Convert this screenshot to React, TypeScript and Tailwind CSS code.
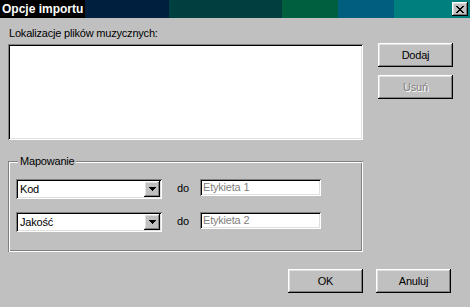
import React from "react";

const raised =
  "shadow-[inset_-1px_-1px_0_#000,inset_1px_1px_0_#fff,inset_-2px_-2px_0_#808080,inset_2px_2px_0_#dfdfdf]";
const sunken =
  "shadow-[inset_1px_1px_0_#808080,inset_-1px_-1px_0_#fff,inset_2px_2px_0_#000,inset_-2px_-2px_0_#dfdfdf]";

function Button({ label, disabled }: { label: string; disabled?: boolean }) {
  return (
    <div
      className={`w-[75px] h-[24px] bg-[#c0c0c0] flex items-center justify-center ${raised} ${
        disabled ? "text-[#808080] [text-shadow:1px_1px_0_#fff]" : "text-black"
      }`}
    >
      {label}
    </div>
  );
}

function Combo({ value }: { value: string }) {
  return (
    <div className={`w-[146px] h-[20px] bg-white flex items-stretch p-[2px] ${sunken}`}>
      <div className="flex-1 flex items-center pl-[2px] text-black">{value}</div>
      <div className={`w-[16px] bg-[#c0c0c0] flex items-center justify-center ${raised}`}>
        <svg width="7" height="4" viewBox="0 0 7 4">
          <path d="M0 0h7v1H0zM1 1h5v1H1zM2 2h3v1H2zM3 3h1v1H3z" fill="#000" />
        </svg>
      </div>
    </div>
  );
}

function Edit({ value }: { value: string }) {
  return (
    <div className={`w-[121px] h-[17px] bg-white flex items-center pl-[3px] text-[#808080] ${sunken}`}>
      {value}
    </div>
  );
}

export default function App() {
  return (
    <div className="w-[470px] h-[307px] bg-[#c0c0c0] flex flex-col font-['Liberation_Sans',Arial,sans-serif] text-[11px] leading-[13px] tracking-[-0.2px] text-black overflow-hidden">
      {/* title bar */}
      <div className="h-[18px] flex shrink-0">
        <div className="w-[85px] bg-black text-white font-bold text-[12px] leading-[18px] pl-[2px] tracking-[0px] whitespace-nowrap overflow-hidden">
          Opcje importu
        </div>
        <div className="w-[84px] bg-[#001f3f]" />
        <div className="w-[113px] bg-[#003f3f]" />
        <div className="w-[56px] bg-[#005f3f]" />
        <div className="w-[56px] bg-[#005f7f]" />
        <div className="flex-1 bg-[#007f7f] flex items-start justify-end pt-[2px] pr-[2px]">
          <div className={`w-[16px] h-[14px] bg-[#c0c0c0] flex items-center justify-center ${raised}`}>
            <svg width="8" height="7" viewBox="0 0 8 7">
              <path
                d="M0 0h2v1H0zM6 0h2v1H6zM1 1h2v1H1zM5 1h2v1H5zM2 2h4v1H2zM3 3h2v1H3zM2 4h4v1H2zM1 5h2v1H1zM5 5h2v1H5zM0 6h2v1H0zM6 6h2v1H6z"
                fill="#000"
              />
            </svg>
          </div>
        </div>
      </div>

      {/* body */}
      <div className="flex flex-col pl-[8px] pt-[9px]">
        <div className="flex">
          <div className="w-[355px] flex flex-col">
            <div className="h-[13px] pl-[1px]">Lokalizacje plików muzycznych:</div>
            <div className={`mt-[4px] h-[96px] bg-white ${sunken}`} />
          </div>
          <div className="ml-[15px] pt-[16px] flex flex-col gap-[8px]">
            <Button label="Dodaj" />
            <Button label="Usuń" disabled />
          </div>
        </div>

        {/* group box */}
        <div
          className={`relative mt-[21px] w-[355px] h-[91px] shadow-[inset_1px_1px_0_#808080,inset_-1px_-1px_0_#fff,inset_2px_2px_0_#fff,inset_-2px_-2px_0_#808080] pl-[8px] pt-[18px] flex flex-col gap-[13px]`}
        >
          <span className="absolute left-[10px] top-[-6px] bg-[#c0c0c0] px-[2px] leading-[13px]">
            Mapowanie
          </span>
          <div className="flex items-start">
            <Combo value="Kod" />
            <span className="ml-[15px] mt-[3px] w-[23px]">do</span>
            <Edit value="Etykieta 1" />
          </div>
          <div className="flex items-start">
            <Combo value="Jakość" />
            <span className="ml-[15px] mt-[3px] w-[23px]">do</span>
            <Edit value="Etykieta 2" />
          </div>
        </div>

        {/* bottom buttons */}
        <div className="mt-[17px] flex pl-[280px] gap-[13px]">
          <Button label="OK" />
          <Button label="Anuluj" />
        </div>
      </div>
    </div>
  );
}
